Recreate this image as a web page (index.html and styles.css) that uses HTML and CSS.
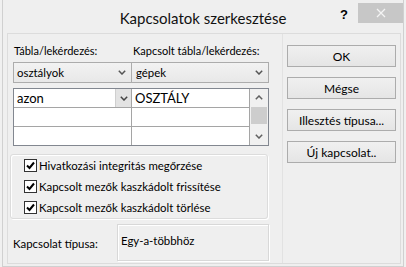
FILE: index.html
```html
<!DOCTYPE html>
<html lang="hu">
<head>
<meta charset="utf-8">
<title>Kapcsolatok szerkesztése</title>
<link rel="stylesheet" href="styles.css">
</head>
<body>
<div class="win">
  <div class="titlebar">
    <div></div>
    <div class="title">Kapcsolatok szerkesztése</div>
    <div class="tb-right">
      <span class="help">?</span>
      <div class="close"><svg width="10" height="10" viewBox="0 0 10 10"><path d="M1 1L9 9M9 1L1 9" stroke="#f4f4f4" stroke-width="1.3" fill="none"/></svg></div>
    </div>
  </div>
  <div class="client">
    <div class="left">
      <div class="top">
        <div class="labels"><span class="lab1">Tábla/lekérdezés:</span><span class="lab2">Kapcsolt tábla/lekérdezés:</span></div>
        <div class="combos">
          <div class="combo c1"><span>osztályok</span><svg class="chev" width="8" height="5" viewBox="0 0 8 5"><path d="M0.8 0.8L4 4L7.2 0.8" stroke="#555" stroke-width="1.5" fill="none"/></svg></div>
          <div class="combo c2"><span>gépek</span><svg class="chev" width="8" height="5" viewBox="0 0 8 5"><path d="M0.8 0.8L4 4L7.2 0.8" stroke="#555" stroke-width="1.5" fill="none"/></svg></div>
        </div>
        <div class="grid">
          <div class="cells">
            <div class="row">
              <div class="cell ca"><span>azon</span><span class="cellbtn"><svg width="8" height="5" viewBox="0 0 8 5"><path d="M0.8 0.8L4 4L7.2 0.8" stroke="#444" stroke-width="1.5" fill="none"/></svg></span></div>
              <div class="cell cb">OSZTÁLY</div>
            </div>
            <div class="row"><div class="cell ca"></div><div class="cell cb"></div></div>
            <div class="row last"><div class="cell ca"></div><div class="cell cb"></div></div>
          </div>
          <div class="scroll">
            <div class="sarrow"><svg width="8" height="5" viewBox="0 0 8 5"><path d="M0.8 4.2L4 1L7.2 4.2" stroke="#606060" stroke-width="1.5" fill="none"/></svg></div>
            <div class="strack"><div class="thumb"></div></div>
            <div class="sarrow"><svg width="8" height="5" viewBox="0 0 8 5"><path d="M0.8 0.8L4 4L7.2 0.8" stroke="#606060" stroke-width="1.5" fill="none"/></svg></div>
          </div>
        </div>
      </div>
      <div class="checks">
        <label class="chk"><span class="box"><svg width="11" height="11" viewBox="0 0 11 11"><path d="M2 5.5L4.5 8L9 2.5" stroke="#000" stroke-width="2" fill="none"/></svg></span>Hivatkozási integritás megőrzése</label>
        <label class="chk"><span class="box"><svg width="11" height="11" viewBox="0 0 11 11"><path d="M2 5.5L4.5 8L9 2.5" stroke="#000" stroke-width="2" fill="none"/></svg></span>Kapcsolt mezők kaszkádolt frissítése</label>
        <label class="chk"><span class="box"><svg width="11" height="11" viewBox="0 0 11 11"><path d="M2 5.5L4.5 8L9 2.5" stroke="#000" stroke-width="2" fill="none"/></svg></span>Kapcsolt mezők kaszkádolt törlése</label>
      </div>
      <div class="type">
        <span class="type-label">Kapcsolat típusa:</span>
        <div class="type-box">Egy-a-többhöz</div>
      </div>
    </div>
    <div class="buttons">
      <div class="btn">OK</div>
      <div class="btn">Mégse</div>
      <div class="btn">Illesztés típusa...</div>
      <div class="btn">Új kapcsolat..</div>
    </div>
  </div>
</div>
</body>
</html>
```
FILE: styles.css
```css
* { box-sizing: border-box; margin: 0; padding: 0; }
html, body { width: 406px; height: 267px; overflow: hidden; background: #f0f0f0; }
body { font-family: Lato, "Liberation Sans", sans-serif; font-size: 11.4px; color: #000; }

.win {
  margin-left: 2px;
  width: 402px;
  height: 267px;
  border-left: 1px solid #d0d0d0;
  border-right: 1px solid #d0d0d0;
  border-bottom: 1px solid #d0d0d0;
  background: #efefef;
  display: flex;
  flex-direction: column;
}

.titlebar {
  height: 33px;
  flex: none;
  display: grid;
  grid-template-columns: 1fr auto 1fr;
  align-items: start;
}
.title { font-size: 15px; line-height: 20px; padding-top: 8px; color: #111; }
.tb-right { display: flex; justify-content: flex-end; align-items: flex-start; }
.help { font: bold 13px "Liberation Sans", sans-serif; margin-top: 7px; margin-right: 10px; }
.close {
  width: 45px; height: 20px; margin-top: 3px;
  background: #c7c7c7;
  display: flex; align-items: center; justify-content: center;
}

.client {
  flex: 1;
  margin: 0 2px 2px 4px;
  border: 1px solid #dcdcdc;
  display: flex;
}

.left {
  width: 275px;
  flex: none;
  border-right: 1px solid #e2e2e2;
  padding-left: 2px;
}

.top { margin-left: 3px; width: 256px; }

.labels { display: flex; margin-top: 10px; height: 14px; line-height: 14px; font-size: 11px; }
.lab1 { width: 118px; padding-left: 1px; }
.lab2 { padding-left: 2px; }

.combos { display: flex; margin-top: 4px; }
.combo {
  height: 21px;
  border: 1px solid #acacac;
  background: linear-gradient(#f2f2f2, #e8e8e8);
  display: flex; align-items: center; justify-content: space-between;
  padding: 0 5px 0 3px;
  flex: none;
}
.c1 { width: 119px; }
.c2 { width: 138px; margin-left: -1px; padding-left: 4px; }

.grid {
  margin-top: 5px;
  height: 58px;
  border: 1px solid #828790;
  background: #fff;
  display: flex;
  font-size: 13px;
}
.cells { flex: 1; }
.row { display: flex; height: 19px; border-bottom: 1px solid #a5a5a5; }
.row.last { height: 18px; border-bottom: none; }
.cell { height: 100%; display: flex; align-items: center; }
.ca { width: 118px; border-right: 1px solid #a5a5a5; padding-left: 3px; justify-content: space-between; }
.cb { flex: 1; padding-left: 3px; border-right: 1px solid #a5a5a5; }
.cellbtn {
  width: 16px; height: 18px;
  background: #e3e3e3;
  border-left: 1px solid #cfcfcf;
  display: flex; align-items: center; justify-content: center;
}

.scroll { width: 18px; background: #f0f0f0; display: flex; flex-direction: column; }
.sarrow { height: 17px; display: flex; align-items: center; justify-content: center; }
.strack { flex: 1; padding: 1px 1px; }
.thumb { height: 17px; background: #cdcdcd; }

.checks {
  margin-top: 8px;
  width: 258px;
  height: 65px;
  border: 1px solid #dcdcdc;
  border-radius: 3px;
  box-shadow: inset 1px 1px 0 #fff, 1px 1px 0 #fff;
  padding-left: 13px;
}
.chk { height: 21px; display: flex; align-items: center; }
.box {
  width: 13px; height: 13px;
  border: 1px solid #333;
  background: #fff;
  margin-right: 2px;
  display: flex; align-items: center; justify-content: center;
}

.type { display: flex; margin-top: 5px; padding-left: 3px; }
.type-label { width: 104px; padding-top: 13px; line-height: 14px; }
.type-box {
  width: 152px; height: 37px;
  border: 1px solid #d8d8d8;
  box-shadow: inset 1px 1px 0 #fff, 1px 1px 0 #fff;
  padding: 9px 0 0 3px;
  line-height: 14px;
}

.buttons {
  padding: 11px 0 0 4px;
  display: flex; flex-direction: column; gap: 10px;
}
.btn {
  width: 109px; height: 22px;
  border: 1px solid #acacac;
  background: linear-gradient(#f0f0f0, #e5e5e5);
  display: flex; align-items: center; justify-content: center;
  font-size: 12px;
}
```
